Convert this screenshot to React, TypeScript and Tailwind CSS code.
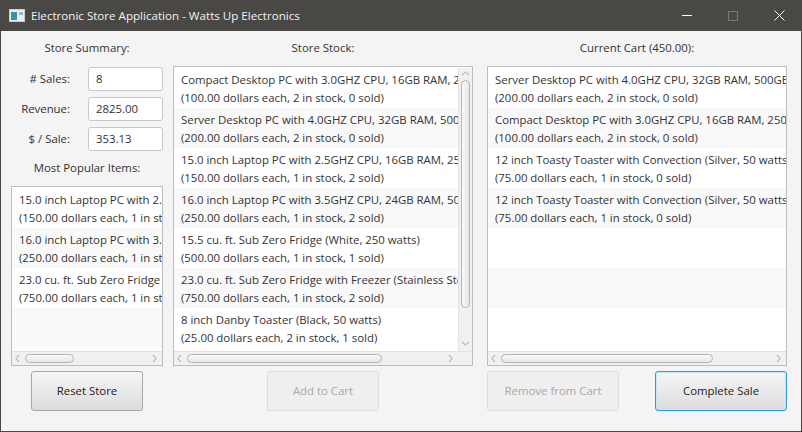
import React from "react";

type Item = { name: string; info: string };

const popular: Item[] = [
  { name: "15.0 inch Laptop PC with 2.5GHZ CPU, 16GB RAM, 250GB SSD drive", info: "(150.00 dollars each, 1 in stock, 2 sold)" },
  { name: "16.0 inch Laptop PC with 3.5GHZ CPU, 24GB RAM, 500GB SSD drive", info: "(250.00 dollars each, 1 in stock, 2 sold)" },
  { name: "23.0 cu. ft. Sub Zero Fridge with Freezer (Stainless Steel, 125 watts)", info: "(750.00 dollars each, 1 in stock, 2 sold)" },
];

const stock: Item[] = [
  { name: "Compact Desktop PC with 3.0GHZ CPU, 16GB RAM, 250GB SSD drive", info: "(100.00 dollars each, 2 in stock, 0 sold)" },
  { name: "Server Desktop PC with 4.0GHZ CPU, 32GB RAM, 500GB SSD drive", info: "(200.00 dollars each, 2 in stock, 0 sold)" },
  { name: "15.0 inch Laptop PC with 2.5GHZ CPU, 16GB RAM, 250GB SSD drive", info: "(150.00 dollars each, 1 in stock, 2 sold)" },
  { name: "16.0 inch Laptop PC with 3.5GHZ CPU, 24GB RAM, 500GB SSD drive", info: "(250.00 dollars each, 1 in stock, 2 sold)" },
  { name: "15.5 cu. ft. Sub Zero Fridge (White, 250 watts)", info: "(500.00 dollars each, 1 in stock, 1 sold)" },
  { name: "23.0 cu. ft. Sub Zero Fridge with Freezer (Stainless Steel, 125 watts)", info: "(750.00 dollars each, 1 in stock, 2 sold)" },
  { name: "8 inch Danby Toaster (Black, 50 watts)", info: "(25.00 dollars each, 2 in stock, 1 sold)" },
];

const cart: Item[] = [
  { name: "Server Desktop PC with 4.0GHZ CPU, 32GB RAM, 500GB SSD drive", info: "(200.00 dollars each, 2 in stock, 0 sold)" },
  { name: "Compact Desktop PC with 3.0GHZ CPU, 16GB RAM, 250GB SSD drive", info: "(100.00 dollars each, 2 in stock, 0 sold)" },
  { name: "12 inch Toasty Toaster with Convection (Silver, 50 watts)", info: "(75.00 dollars each, 1 in stock, 0 sold)" },
  { name: "12 inch Toasty Toaster with Convection (Silver, 50 watts)", info: "(75.00 dollars each, 1 in stock, 0 sold)" },
];

function Chevron({ dir }: { dir: "left" | "right" | "up" | "down" }) {
  const d = {
    left: "M5 1 L2 4.5 L5 8",
    right: "M2 1 L5 4.5 L2 8",
    up: "M1 5 L4.5 2 L8 5",
    down: "M1 2 L4.5 5 L8 2",
  }[dir];
  return (
    <svg width="9" height="9" viewBox="0 0 9 9" className="shrink-0">
      <path d={d} fill="none" stroke="#a0a0a0" strokeWidth="1" />
    </svg>
  );
}

function HScroll({ thumbLeft, thumbWidth, corner }: { thumbLeft: number; thumbWidth: number; corner?: boolean }) {
  return (
    <div className="flex h-[14px] shrink-0">
      <div className="flex-1 flex items-center bg-[#f0f0f0] border-t border-[#e2e2e2] px-[2px]">
        <Chevron dir="left" />
        <div className="relative flex-1 h-full">
          <div
            className="absolute top-[2px] h-[9px] rounded-full border border-[#b5b5b5] bg-gradient-to-b from-[#fafafa] to-[#e6e6e6]"
            style={{ left: thumbLeft, width: thumbWidth }}
          />
        </div>
        <Chevron dir="right" />
      </div>
      {corner && <div className="w-[14px] bg-[#f0f0f0] border-t border-[#e2e2e2]" />}
    </div>
  );
}

function Rows({ items, total }: { items: Item[]; total: number }) {
  const rows = Array.from({ length: total }, (_, i) => items[i]);
  return (
    <div className="flex-1 min-w-0 overflow-hidden">
      {rows.map((it, i) => (
        <div
          key={i}
          className={`h-[40px] pl-[7px] pt-[3px] whitespace-nowrap leading-[18px] text-[#333] ${i % 2 === 0 ? "bg-white" : "bg-[#f9f9f9]"}`}
        >
          {it && (
            <>
              <div>{it.name}</div>
              <div>{it.info}</div>
            </>
          )}
        </div>
      ))}
    </div>
  );
}

function ListBox({
  items,
  total,
  thumbLeft,
  thumbWidth,
  vscroll,
  className,
}: {
  items: Item[];
  total: number;
  thumbLeft: number;
  thumbWidth: number;
  vscroll?: boolean;
  className: string;
}) {
  return (
    <div className={`flex flex-col border border-[#bdbdbd] bg-white ${className}`}>
      <div className="flex flex-1 min-h-0 pt-[1px]">
        <Rows items={items} total={total} />
        {vscroll && (
          <div className="w-[14px] flex flex-col items-center bg-[#f0f0f0] border-l border-[#e2e2e2] py-[2px]">
            <Chevron dir="up" />
            <div className="relative flex-1 w-full">
              <div className="absolute left-[2px] top-[1px] w-[9px] h-[228px] rounded-full border border-[#b5b5b5] bg-gradient-to-r from-[#fafafa] to-[#e6e6e6]" />
            </div>
            <Chevron dir="down" />
          </div>
        )}
      </div>
      <HScroll thumbLeft={thumbLeft} thumbWidth={thumbWidth} corner={vscroll} />
    </div>
  );
}

function Field({ label, value }: { label: string; value: string }) {
  return (
    <div className="flex items-center h-[24px]">
      <div className="w-[59px] text-right text-[#333]">{label}</div>
      <div className="ml-[18px] w-[75px] h-[24px] rounded-[3px] border border-[#c8c8c8] bg-white pl-[7px] leading-[22px] text-[#333]">
        {value}
      </div>
    </div>
  );
}

function Btn({ label, w, disabled, focused }: { label: string; w: string; disabled?: boolean; focused?: boolean }) {
  const base = "h-[40px] rounded-[3px] flex items-center justify-center";
  if (disabled)
    return (
      <div className={`${base} ${w} border border-[#dedede] bg-[#efefef] text-[#a8a8a8]`}>{label}</div>
    );
  return (
    <div
      className={`${base} ${w} bg-gradient-to-b from-[#f6f6f6] to-[#dcdcdc] text-[#222] ${
        focused ? "border border-[#2c9fd8] shadow-[inset_0_0_0_1px_#c9e6f6]" : "border border-[#a8a8a8]"
      }`}
    >
      {label}
    </div>
  );
}

export default function App() {
  return (
    <div
      className="w-[802px] h-[432px] flex flex-col bg-[#4a4845] text-[11.4px] select-none"
      style={{ fontFamily: '"Open Sans", "Noto Sans", sans-serif' }}
    >
      {/* Title bar */}
      <div className="h-[31px] flex items-center shrink-0 text-white">
        <svg width="16" height="13" viewBox="0 0 16 13" className="ml-[9px] mr-[6px]">
          <rect x="0.5" y="0.5" width="15" height="12" fill="#e9eef0" stroke="#c7ced2" />
          <rect x="2" y="3" width="6" height="8" fill="#3b8bb8" />
          <rect x="2" y="3" width="3" height="8" fill="#2f9f7a" />
          <rect x="10" y="3" width="4" height="3" fill="#9fb6c3" />
        </svg>
        <span className="text-[11.6px] text-[#f2f2f2]">Electronic Store Application - Watts Up Electronics</span>
        <div className="ml-auto flex items-center h-full">
          <div className="w-[46px] h-full flex items-center justify-center">
            <div className="w-[10px] h-[1px] bg-white" />
          </div>
          <div className="w-[46px] h-full flex items-center justify-center">
            <div className="w-[10px] h-[10px] border border-[#7a7876]" />
          </div>
          <div className="w-[46px] h-full flex items-center justify-center">
            <svg width="11" height="11" viewBox="0 0 11 11">
              <path d="M0.5 0.5 L10.5 10.5 M10.5 0.5 L0.5 10.5" stroke="#fff" strokeWidth="1" />
            </svg>
          </div>
        </div>
      </div>

      {/* Body */}
      <div className="flex-1 mx-[1px] mb-[1px] bg-[#f4f4f4] flex pl-[10px] pt-[5px]">
        {/* Left column */}
        <div className="w-[152px] flex flex-col">
          <div className="h-[31px] leading-[20px] pt-[2px] text-center text-[#333]">Store Summary:</div>
          <div className="flex flex-col gap-[6px]">
            <Field label="# Sales:" value="8" />
            <Field label="Revenue:" value="2825.00" />
            <Field label="$ / Sale:" value="353.13" />
          </div>
          <div className="h-[35px] pt-[7px] leading-[20px] text-center text-[#333]">Most Popular Items:</div>
          <ListBox items={popular} total={5} thumbLeft={2} thumbWidth={49} className="h-[180px]" />
          <div className="mt-[5px] flex justify-center">
            <Btn label="Reset Store" w="w-[112px]" />
          </div>
        </div>

        {/* Middle column */}
        <div className="w-[300px] ml-[10px] flex flex-col">
          <div className="h-[30px] leading-[20px] pt-[2px] text-center text-[#333]">Store Stock:</div>
          <ListBox items={stock} total={7} thumbLeft={2} thumbWidth={195} vscroll className="h-[300px]" />
          <div className="mt-[5px] flex justify-center">
            <Btn label="Add to Cart" w="w-[112px]" disabled />
          </div>
        </div>

        {/* Right column */}
        <div className="w-[300px] ml-[14px] flex flex-col">
          <div className="h-[30px] leading-[20px] pt-[2px] text-center text-[#333]">Current Cart (450.00):</div>
          <ListBox items={cart} total={7} thumbLeft={2} thumbWidth={212} className="h-[300px]" />
          <div className="mt-[5px] flex justify-between">
            <Btn label="Remove from Cart" w="w-[132px]" disabled />
            <Btn label="Complete Sale" w="w-[132px]" focused />
          </div>
        </div>
      </div>
    </div>
  );
}
